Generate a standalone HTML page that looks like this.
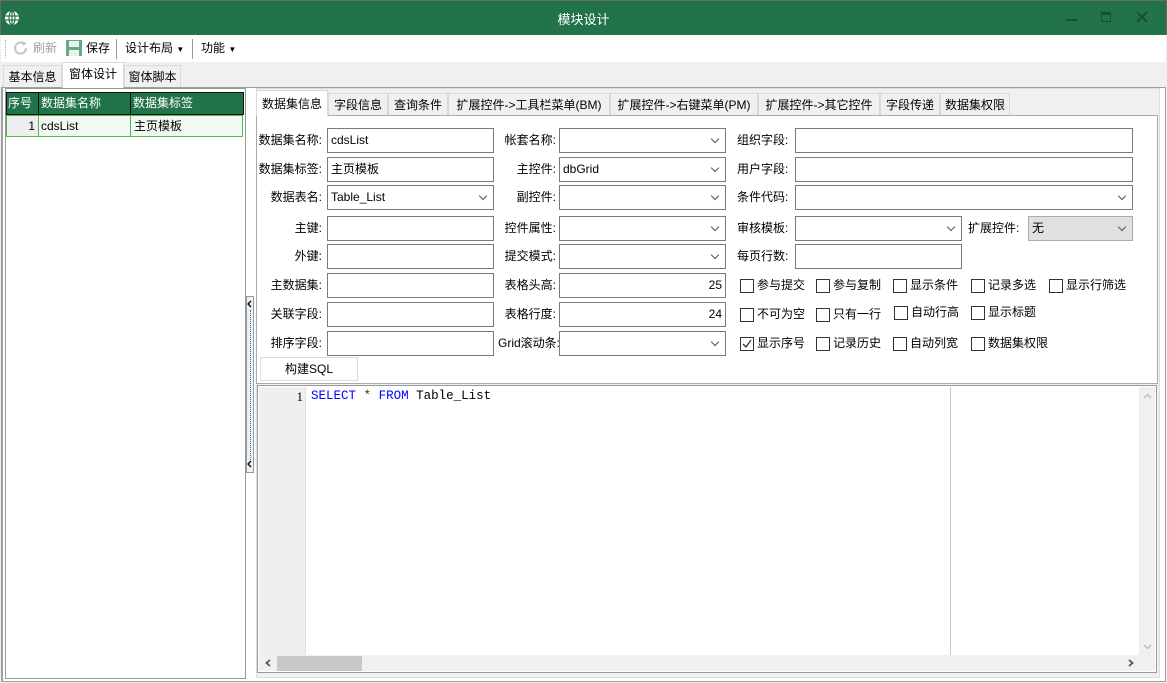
<!DOCTYPE html>
<html><head><meta charset="utf-8">
<style>
*{box-sizing:border-box;margin:0;padding:0}
body{width:1167px;height:683px;position:relative;overflow:hidden;background:#f0f0f0;font-family:"Liberation Sans","Noto Sans CJK SC",sans-serif;font-size:12px;color:#000}
.a{position:absolute}
.lbl{position:absolute;text-align:right;white-space:nowrap;line-height:24px;height:24px}
.inp{position:absolute;background:#fff;border:1px solid #7a7a7a;height:25px;line-height:23px;padding-left:3px;white-space:nowrap}
.sel::after{content:"";position:absolute;right:7px;top:7px;width:5px;height:5px;border-right:1px solid #555;border-bottom:1px solid #555;transform:rotate(45deg)}
.cb{position:absolute;white-space:nowrap;line-height:16px;padding-left:17px}
.cb::before{content:"";position:absolute;left:0;top:2px;width:12px;height:12px;border:1px solid #333;background:#fff}
.tab{position:absolute;top:93px;height:22px;line-height:22px;text-align:center;border:1px solid #d9d9d9;border-bottom:none;background:#f0f0f0;white-space:nowrap}
.otab{position:absolute;top:65px;height:22px;line-height:22px;text-align:center;border:1px solid #d9d9d9;border-bottom:none;background:#f0f0f0}
</style></head><body>
<!-- title -->
<div class="a" style="left:0;top:0;width:1167px;height:35px;background:#22734a;border:1px solid #6b6b6b;border-bottom:none"></div>
<svg class="a" style="left:4px;top:10px" width="16" height="16" viewBox="0 0 16 16"><circle cx="8" cy="8" r="7" fill="#fff"/><g stroke="#22734a" stroke-width="1.2" fill="none"><ellipse cx="8" cy="8" rx="3" ry="7"/><line x1="1" y1="6" x2="15" y2="6"/><line x1="1" y1="10" x2="15" y2="10"/><line x1="8" y1="1" x2="8" y2="15"/></g></svg>
<div class="a" style="left:0;top:9px;width:1167px;text-align:center;color:#fff;font-size:13px">模块设计</div>
<div class="a" style="left:1066px;top:19px;width:11px;height:2px;background:#1a4f33"></div>
<div class="a" style="left:1101px;top:12px;width:10px;height:10px;border:1.5px solid #1a4f33;border-top-width:3px"></div>
<svg class="a" style="left:1136px;top:11px" width="12" height="12"><path d="M1 1L11 11M11 1L1 11" stroke="#1a4f33" stroke-width="2"/></svg>
<!-- toolbar -->
<div class="a" style="left:1px;top:35px;width:1165px;height:27px;background:#fff"></div>
<div class="a" style="left:5px;top:40px;width:1px;height:18px;border-left:1px dotted #aaa"></div>
<svg class="a" style="left:13px;top:40px" width="16" height="16"><path d="M13 8A5.5 5.5 0 1 1 10.5 3.5" stroke="#c8c8c8" stroke-width="2.2" fill="none"/><path d="M9 1L14 3L10 6Z" fill="#c8c8c8"/></svg>
<div class="a" style="left:33px;top:39px;color:#a0a0a0">刷新</div>
<svg class="a" style="left:66px;top:40px" width="16" height="16"><rect x="0" y="0" width="16" height="16" fill="#6aa884"/><rect x="3" y="1" width="10" height="6" fill="#e8f3ec"/><rect x="3" y="10" width="10" height="6" fill="#e8f3ec"/></svg>
<div class="a" style="left:86px;top:39px">保存</div>
<div class="a" style="left:116px;top:39px;width:1px;height:20px;background:#999"></div>
<div class="a" style="left:125px;top:39px">设计布局 <span style="font-size:8px">▼</span></div>
<div class="a" style="left:192px;top:39px;width:1px;height:20px;background:#999"></div>
<div class="a" style="left:201px;top:39px">功能 <span style="font-size:8px">▼</span></div>
<!-- outer tabs -->
<div class="otab" style="left:3px;width:59px">基本信息</div>
<div class="otab" style="left:62px;top:62px;height:26px;width:62px;background:#fff;z-index:2">窗体设计</div>
<div class="otab" style="left:124px;width:57px">窗体脚本</div>
<div class="a" style="left:1px;top:87px;width:1165px;height:595px;background:#fff;border:1px solid #a0a0a0;border-left:2px solid #a0a0a0"></div>
<!-- left panel -->
<div class="a" style="left:5px;top:88px;width:241px;height:591px;background:#fff;border:1px solid #999"></div>
<div class="a" style="left:6px;top:92px;width:238px;height:23px;background:#22734a;border:1px solid #111"></div>
<div class="a" style="left:6px;top:92px;width:33px;height:23px;border-right:1px solid #111;color:#fff;line-height:22px;padding-left:2px">序号</div>
<div class="a" style="left:39px;top:92px;width:92px;height:23px;border-right:1px solid #111;color:#fff;line-height:22px;padding-left:2px">数据集名称</div>
<div class="a" style="left:131px;top:92px;color:#fff;line-height:22px;padding-left:2px">数据集标签</div>
<div class="a" style="left:6px;top:115px;width:237px;height:22px;background:#f2f9f2;border:1px solid #4fb84f"></div>
<div class="a" style="left:7px;top:116px;width:32px;height:20px;background:#eee;border-right:1px solid #4fb84f;text-align:right;padding-right:3px;line-height:20px">1</div>
<div class="a" style="left:39px;top:116px;width:92px;height:20px;border-right:1px solid #4fb84f;line-height:20px;padding-left:2px">cdsList</div>
<div class="a" style="left:131px;top:116px;line-height:20px;padding-left:3px">主页模板</div>
<!-- splitter -->
<div class="a" style="left:246px;top:296px;width:8px;height:177px;background:#f0f0f0;border:1px solid #999"></div>
<div class="a" style="left:250px;top:310px;width:1px;height:150px;border-left:1px dotted #1a7fe0"></div>
<svg class="a" style="left:247px;top:300px" width="6" height="8"><path d="M4 1L1 4L4 7" stroke="#000" stroke-width="1.3" fill="none"/></svg>
<svg class="a" style="left:247px;top:460px" width="6" height="8"><path d="M4 1L1 4L4 7" stroke="#000" stroke-width="1.3" fill="none"/></svg>
<!-- right area -->
<div class="a" style="left:256px;top:88px;width:904px;height:590px;background:#f0f0f0;border:1px solid #ddd"></div>
<div class="tab" style="left:256px;top:90px;height:26px;width:72px;background:#fff;z-index:2;line-height:26px">数据集信息</div>
<div class="tab" style="left:328px;width:60px">字段信息</div>
<div class="tab" style="left:388px;width:60px">查询条件</div>
<div class="tab" style="left:448px;width:162px">扩展控件-&gt;工具栏菜单(BM)</div>
<div class="tab" style="left:610px;width:148px">扩展控件-&gt;右键菜单(PM)</div>
<div class="tab" style="left:758px;width:122px">扩展控件-&gt;其它控件</div>
<div class="tab" style="left:880px;width:60px">字段传递</div>
<div class="tab" style="left:940px;width:70px">数据集权限</div>
<div class="a" style="left:256px;top:115px;width:902px;height:269px;background:#fff;border:1px solid #aaa"></div>
<!-- column 1 -->
<div class="lbl" style="left:240px;width:82px;top:128px">数据集名称:</div><div class="inp" style="left:327px;top:128px;width:167px">cdsList</div>
<div class="lbl" style="left:240px;width:82px;top:157px">数据集标签:</div><div class="inp" style="left:327px;top:157px;width:167px">主页模板</div>
<div class="lbl" style="left:240px;width:82px;top:185px">数据表名:</div><div class="inp sel" style="left:327px;top:185px;width:167px">Table_List</div>
<div class="lbl" style="left:240px;width:82px;top:216px">主键:</div><div class="inp" style="left:327px;top:216px;width:167px"></div>
<div class="lbl" style="left:240px;width:82px;top:244px">外键:</div><div class="inp" style="left:327px;top:244px;width:167px"></div>
<div class="lbl" style="left:240px;width:82px;top:273px">主数据集:</div><div class="inp" style="left:327px;top:273px;width:167px"></div>
<div class="lbl" style="left:240px;width:82px;top:302px">关联字段:</div><div class="inp" style="left:327px;top:302px;width:167px"></div>
<div class="lbl" style="left:240px;width:82px;top:331px">排序字段:</div><div class="inp" style="left:327px;top:331px;width:167px"></div>
<div class="a" style="left:260px;top:357px;width:98px;height:24px;border:1px solid #ddd;background:#fff;text-align:center;line-height:22px">构建SQL</div>
<!-- column 2 -->
<div class="lbl" style="left:480px;width:76px;top:128px">帐套名称:</div><div class="inp sel" style="left:559px;top:128px;width:167px"></div>
<div class="lbl" style="left:480px;width:76px;top:157px">主控件:</div><div class="inp sel" style="left:559px;top:157px;width:167px">dbGrid</div>
<div class="lbl" style="left:480px;width:76px;top:185px">副控件:</div><div class="inp sel" style="left:559px;top:185px;width:167px"></div>
<div class="lbl" style="left:480px;width:76px;top:216px">控件属性:</div><div class="inp sel" style="left:559px;top:216px;width:167px"></div>
<div class="lbl" style="left:480px;width:76px;top:244px">提交模式:</div><div class="inp sel" style="left:559px;top:244px;width:167px"></div>
<div class="lbl" style="left:480px;width:76px;top:273px">表格头高:</div><div class="inp" style="left:559px;top:273px;width:167px;text-align:right;padding-right:3px">25</div>
<div class="lbl" style="left:480px;width:76px;top:302px">表格行度:</div><div class="inp" style="left:559px;top:302px;width:167px;text-align:right;padding-right:3px">24</div>
<div class="lbl" style="left:480px;width:80px;top:331px">Grid滚动条:</div><div class="inp sel" style="left:559px;top:331px;width:167px"></div>
<!-- column 3 -->
<div class="lbl" style="left:737px;top:128px">组织字段:</div><div class="inp" style="left:795px;top:128px;width:338px"></div>
<div class="lbl" style="left:737px;top:157px">用户字段:</div><div class="inp" style="left:795px;top:157px;width:338px"></div>
<div class="lbl" style="left:737px;top:185px">条件代码:</div><div class="inp sel" style="left:795px;top:185px;width:338px"></div>
<div class="lbl" style="left:737px;top:216px">审核模板:</div><div class="inp sel" style="left:795px;top:216px;width:167px"></div>
<div class="lbl" style="left:968px;top:216px">扩展控件:</div><div class="inp sel" style="left:1028px;top:216px;width:105px;background:#e0e0e0;border-color:#aaa">无</div>
<div class="lbl" style="left:737px;top:244px">每页行数:</div><div class="inp" style="left:795px;top:244px;width:167px"></div>
<!-- checkboxes -->
<div class="cb" style="left:740px;top:277px">参与提交</div>
<div class="cb" style="left:816px;top:277px">参与复制</div>
<div class="cb" style="left:893px;top:277px">显示条件</div>
<div class="cb" style="left:971px;top:277px">记录多选</div>
<div class="cb" style="left:1049px;top:277px">显示行筛选</div>
<div class="cb" style="left:740px;top:306px">不可为空</div>
<div class="cb" style="left:816px;top:306px">只有一行</div>
<div class="cb" style="left:894px;top:304px">自动行高</div>
<div class="cb" style="left:971px;top:304px">显示标题</div>
<div class="cb" style="left:740px;top:335px">显示序号</div>
<svg class="a" style="left:741px;top:338px" width="12" height="12"><path d="M2 6L5 9L10 2" stroke="#333" stroke-width="1.3" fill="none"/></svg>
<div class="cb" style="left:816px;top:335px">记录历史</div>
<div class="cb" style="left:893px;top:335px">自动列宽</div>
<div class="cb" style="left:971px;top:335px">数据集权限</div>
<!-- editor -->
<div class="a" style="left:257px;top:385px;width:900px;height:288px;background:#fff;border:1px solid #999"></div>
<div class="a" style="left:259px;top:387px;width:47px;height:268px;background:#efefef;border-right:1px solid #e0e0e0"></div>
<div class="a" style="left:259px;top:389px;width:44px;text-align:right;font-family:'Liberation Serif',serif;font-size:13px">1</div>
<div class="a" style="left:311px;top:389px;font-family:'Liberation Mono',monospace;font-size:12.5px;white-space:pre"><span style="color:#0000ff">SELECT</span> <span style="color:#333">*</span> <span style="color:#0000ff">FROM</span> Table_List</div>
<div class="a" style="left:950px;top:387px;width:1px;height:268px;background:#c8c8c8"></div>
<div class="a" style="left:1139px;top:387px;width:16px;height:268px;background:#f0f0f0"></div>
<svg class="a" style="left:1143px;top:393px" width="9" height="6"><path d="M1 5L4.5 1.5L8 5" stroke="#bbb" stroke-width="1.5" fill="none"/></svg>
<svg class="a" style="left:1143px;top:644px" width="9" height="6"><path d="M1 1L4.5 4.5L8 1" stroke="#bbb" stroke-width="1.5" fill="none"/></svg>
<div class="a" style="left:259px;top:655px;width:896px;height:16px;background:#f0f0f0"></div>
<div class="a" style="left:277px;top:656px;width:85px;height:15px;background:#c8c8c8"></div>
<svg class="a" style="left:265px;top:659px" width="6" height="8"><path d="M5 1L1.5 4L5 7" stroke="#555" stroke-width="1.8" fill="none"/></svg>
<svg class="a" style="left:1128px;top:659px" width="6" height="8"><path d="M1 1L4.5 4L1 7" stroke="#555" stroke-width="1.8" fill="none"/></svg>
</body></html>
